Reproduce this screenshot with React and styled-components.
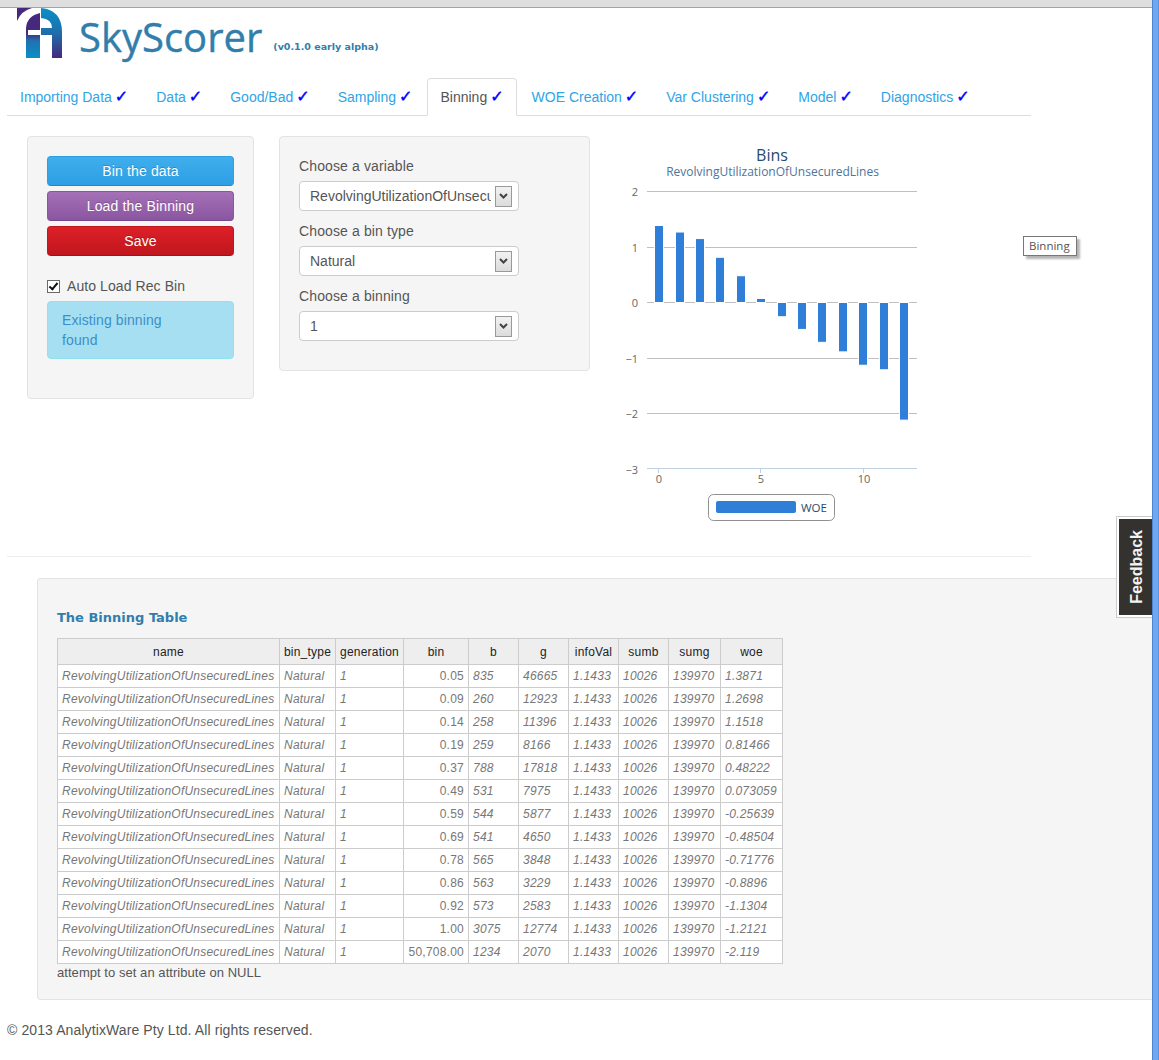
import React from 'react';
import styled, { createGlobalStyle } from 'styled-components';

const GlobalStyle = createGlobalStyle`
  html, body {
    margin: 0;
    padding: 0;
    background: #fff;
    font-family: "Liberation Sans", Arial, sans-serif;
    font-size: 14px;
    color: #555;
  }
`;

const BRAND_FONT = `"DejaVu Sans", Verdana, sans-serif`;
const CHART_FONT = `"Open Sans", "DejaVu Sans", sans-serif`;

const Page = styled.div`
  position: relative;
  display: flex;
  width: 1159px;
  height: 1060px;
  overflow: hidden;
`;

const Main = styled.div`
  width: 1152px;
  flex: none;
`;

const WindowEdge = styled.div`
  flex: 1;
  background: #6ea8f0;
  border-left: 1px solid #4f86cf;
  border-right: 1px solid #5f97de;
`;

const ChromeBar = styled.div`
  height: 7px;
  background: #dedede;
  border-bottom: 1px solid #a3a3a3;
`;

const Brand = styled.header`
  display: flex;
  align-items: flex-start;
  height: 50px;
  padding-left: 17px;
`;

const Title = styled.h1`
  margin: 4px 0 0 17px;
  font-family: "Open Sans", sans-serif;
  font-size: 40px;
  line-height: 50px;
  font-weight: 400;
  color: #317eac;
  -webkit-text-stroke: 0.4px #317eac;
`;

const Version = styled.small`
  margin: 31px 0 0 11px;
  font-family: ${BRAND_FONT};
  font-size: 9.5px;
  line-height: 16px;
  font-weight: 700;
  color: #317eac;
`;

const Tabs = styled.ul`
  display: flex;
  width: 1024px;
  height: 37px;
  margin: 20px 0 0 7px;
  padding: 0;
  list-style: none;
  border-bottom: 1px solid #ddd;
`;

const Tab = styled.li`
  box-sizing: border-box;
  height: 38px;
  margin-right: 2px;
  padding: 8px 12px;
  line-height: 20px;
  white-space: nowrap;
  color: ${p => (p.$active ? '#555' : '#2fa4e7')};
  background: ${p => (p.$active ? '#fff' : 'transparent')};
  border: 1px solid ${p => (p.$active ? '#ddd' : 'transparent')};
  border-bottom-color: ${p => (p.$active ? '#fff' : 'transparent')};
  border-radius: 4px 4px 0 0;
`;

const Tick = styled.span`
  margin-left: 3px;
  font-family: "DejaVu Sans", sans-serif;
  font-size: 16px;
  font-weight: 700;
  color: #0000ff;
  -webkit-text-stroke: 0.5px #0000ff;
`;

const Workspace = styled.section`
  display: flex;
  align-items: flex-start;
  height: 400px;
  margin: 20px 0 0 27px;
`;

const Well = styled.div`
  box-sizing: border-box;
  padding: 19px;
  background: #f5f5f5;
  border: 1px solid #e3e3e3;
  border-radius: 4px;
`;

const ActionsWell = styled(Well)`
  width: 227px;
  height: 263px;
  margin-right: 25px;
`;

const VariableWell = styled(Well)`
  width: 311px;
  height: 235px;
  margin-right: 20px;
`;

const ActionButton = styled.button`
  display: block;
  box-sizing: border-box;
  width: 187px;
  height: 30px;
  margin: 0 0 5px;
  padding: 0;
  font: 14px/20px "Liberation Sans", Arial, sans-serif;
  letter-spacing: 0.15px;
  color: #fff;
  text-shadow: 0 -1px 0 rgba(0, 0, 0, 0.2);
  background: linear-gradient(${p => p.$from}, ${p => p.$to});
  border: 1px solid ${p => p.$to};
  border-bottom-color: ${p => p.$edge};
  border-radius: 4px;
`;

const CheckRow = styled.label`
  display: flex;
  align-items: center;
  height: 20px;
  margin: 20px 0 5px;
  line-height: 20px;
  letter-spacing: 0.08px;
`;

const CheckInput = styled.input`
  appearance: none;
  position: relative;
  box-sizing: border-box;
  width: 13px;
  height: 13px;
  margin: 0 7px 0 0;
  background: #fff;
  border: 1px solid #6a6a6a;

  &:checked::after {
    content: '';
    position: absolute;
    left: 3px;
    top: 0;
    width: 3px;
    height: 7px;
    border: solid #111;
    border-width: 0 2px 2px 0;
    transform: rotate(40deg);
  }
`;

const Notice = styled.div`
  box-sizing: border-box;
  width: 187px;
  height: 58px;
  padding: 8px 35px 8px 14px;
  line-height: 20px;
  letter-spacing: 0.1px;
  color: #3a8fc9;
  background: #a6dff1;
  border: 1px solid #8fe3ee;
  border-radius: 4px;
`;

const FieldLabel = styled.div`
  height: 20px;
  margin-bottom: 5px;
  line-height: 20px;
  letter-spacing: 0.12px;
`;

const Dropdown = styled.div`
  display: flex;
  align-items: center;
  box-sizing: border-box;
  width: 220px;
  height: 30px;
  margin-bottom: 10px;
  padding: 0 6px 0 10px;
  background: #fff;
  border: 1px solid #ccc;
  border-radius: 4px;
`;

const DropdownValue = styled.span`
  flex: 1;
  overflow: hidden;
  white-space: nowrap;
  line-height: 20px;
  margin-right: 4px;
`;

const DropdownArrow = styled.span`
  display: flex;
  align-items: center;
  justify-content: center;
  box-sizing: border-box;
  width: 17px;
  height: 21px;
  background: linear-gradient(#f2f2f2, #dcdcdc);
  border: 1px solid #999;
`;

const ChartSvg = styled.svg`
  display: block;
  flex: none;
  width: 320px;
  height: 400px;
  font-family: ${CHART_FONT};
`;

const Tooltip = styled.div`
  position: absolute;
  left: 1023px;
  top: 236px;
  box-sizing: border-box;
  width: 54px;
  height: 20px;
  padding-left: 5px;
  font-family: ${CHART_FONT};
  font-size: 11.5px;
  line-height: 18px;
  color: #555;
  background: #fff;
  border: 1px solid #777;
  box-shadow: 3px 3px 2px #b5b5b5;
`;

const Divider = styled.hr`
  width: 1024px;
  height: 1px;
  margin: 20px 0 0 7px;
  background: #eee;
  border: 0;
`;

const TableWell = styled(Well)`
  width: 1125px;
  height: 422px;
  margin: 21px 0 0 37px;
  padding: 30px 19px 0;
  border-right: 0;
  border-radius: 4px 0 0 4px;
`;

const TableTitle = styled.h4`
  height: 17px;
  margin: 0 0 12px;
  font-family: ${BRAND_FONT};
  font-size: 13px;
  line-height: 17px;
  font-weight: 700;
  color: #317eac;
`;

const BinTable = styled.table`
  width: 725px;
  table-layout: fixed;
  border-collapse: collapse;
  background: #fff;
  font-size: 12px;
  letter-spacing: 0.23px;
`;

const HeadCell = styled.th`
  box-sizing: border-box;
  width: ${p => p.$w}px;
  height: 26px;
  padding: 0;
  font-weight: 400;
  text-align: center;
  white-space: nowrap;
  color: #222;
  background: #eee;
  border: 1px solid #ccc;
`;

const Cell = styled.td`
  height: 22px;
  padding: 0 4px;
  white-space: nowrap;
  overflow: hidden;
  font-style: ${p => (p.$num ? 'normal' : 'italic')};
  text-align: ${p => (p.$num ? 'right' : 'left')};
  color: #777;
  border: 1px solid #ccc;
`;

const TableNote = styled.div`
  margin-top: 1px;
  font-size: 13px;
  line-height: 16px;
  letter-spacing: 0.05px;
`;

const Footer = styled.footer`
  margin: 20px 0 0 7px;
  line-height: 20px;
  letter-spacing: 0.1px;
`;

const FeedbackTab = styled.div`
  position: absolute;
  left: 1116px;
  top: 516px;
  box-sizing: border-box;
  width: 36px;
  height: 102px;
  padding: 2px 0 2px 2px;
  background: #fff;
  border: 1px solid #ccc;
  border-right: 0;
`;

const FeedbackFace = styled.div`
  display: flex;
  align-items: center;
  justify-content: center;
  height: 100%;
  padding-left: 2px;
  background: #33322f;
`;

const FeedbackLabel = styled.span`
  writing-mode: vertical-rl;
  transform: rotate(180deg);
  font-size: 16px;
  font-weight: 700;
  color: #f2f2f2;
`;

const tabs = ['Importing Data', 'Data', 'Good/Bad', 'Sampling', 'Binning', 'WOE Creation', 'Var Clustering', 'Model', 'Diagnostics'];

const columns = [
  ['name', 222], ['bin_type', 56], ['generation', 68], ['bin', 65], ['b', 50],
  ['g', 50], ['infoVal', 50], ['sumb', 50], ['sumg', 52], ['woe', 62],
];

const rows = [
  ['0.05', 835, 46665, 1.3871],
  ['0.09', 260, 12923, 1.2698],
  ['0.14', 258, 11396, 1.1518],
  ['0.19', 259, 8166, 0.81466],
  ['0.37', 788, 17818, 0.48222],
  ['0.49', 531, 7975, 0.073059],
  ['0.59', 544, 5877, -0.25639],
  ['0.69', 541, 4650, -0.48504],
  ['0.78', 565, 3848, -0.71776],
  ['0.86', 563, 3229, -0.8896],
  ['0.92', 573, 2583, -1.1304],
  ['1.00', 3075, 12774, -1.2121],
  ['50,708.00', 1234, 2070, -2.119],
];

const ZERO_Y = 302.5;
const UNIT = 55.5;
const BAR_X = [659, 680, 700, 720, 741, 761, 782, 802, 822, 843, 863, 884, 904];
const gridY = v => Math.floor(ZERO_Y - v * UNIT) + 0.5;

const Logo = () => (
  <svg width="45" height="50" viewBox="0 0 45 50" style={{ flex: 'none' }}>
    <defs>
      <linearGradient id="logoLeft" x1="0" y1="0" x2="0" y2="1">
        <stop offset="0.45" stopColor="#46287c" />
        <stop offset="0.62" stopColor="#1f72b0" />
        <stop offset="1" stopColor="#0a8fc6" />
      </linearGradient>
      <linearGradient id="logoRight" x1="0" y1="0" x2="0" y2="1">
        <stop offset="0" stopColor="#0a8fc6" />
        <stop offset="0.5" stopColor="#1f6eaa" />
        <stop offset="1" stopColor="#46287c" />
      </linearGradient>
    </defs>
    <path d="M0 0H15Q4 3 0 13Z" fill="#46287c" />
    <path d="M9 50V20Q10 8 23 5V22H11V27H23V50Z" fill="url(#logoLeft)" />
    <path d="M24 0Q45 2 45 24V50H35V27H24V20H35Q35 11 24 10Z" fill="url(#logoRight)" />
  </svg>
);

const Chart = () => (
  <ChartSvg viewBox="610 136 320 400">
    <text x="772" y="161" textAnchor="middle" fontSize="16" fill="#274b6d">Bins</text>
    <text x="772.5" y="176" textAnchor="middle" fontSize="12" fill="#4d759e">RevolvingUtilizationOfUnsecuredLines</text>
    {[2, 1, 0, -1, -2].map(v => (
      <line key={v} x1="647" x2="917" y1={gridY(v)} y2={gridY(v)} stroke="#c0c0c0" />
    ))}
    <line x1="647" x2="917" y1="468.5" y2="468.5" stroke="#c0d0e0" />
    {[2, 1, 0, -1, -2, -3].map(v => (
      <text key={v} x="638" y={gridY(v) + 4} textAnchor="end" fontSize="11" fill="#666">
        {v < 0 ? `\u2212${-v}` : v}
      </text>
    ))}
    {[[0, 659], [5, 761], [10, 864]].map(([v, x]) => (
      <g key={v}>
        <line x1={x - 0.5} x2={x - 0.5} y1="469" y2="473" stroke="#c0d0e0" />
        <text x={x} y="483" textAnchor="middle" fontSize="11" fill="#666">{v}</text>
      </g>
    ))}
    {rows.map((r, i) => {
      const h = Math.abs(r[3]) * UNIT;
      return (
        <rect
          key={r[0]}
          x={BAR_X[i] - 4.5}
          y={r[3] > 0 ? ZERO_Y - h : ZERO_Y}
          width="9"
          height={h}
          fill="#2f7ed8"
          stroke="#fff"
        />
      );
    })}
    <rect x="708.5" y="494.5" width="126" height="26" rx="5" fill="#fff" stroke="#909090" />
    <rect x="716" y="501" width="80" height="12" rx="2" fill="#2f7ed8" />
    <text x="801" y="512" fontSize="11.5" fill="#274b6d">WOE</text>
  </ChartSvg>
);

const App = () => (
  <Page>
    <GlobalStyle />
    <Main>
      <ChromeBar />
      <Brand>
        <Logo />
        <Title>SkyScorer</Title>
        <Version>(v0.1.0 early alpha)</Version>
      </Brand>
      <Tabs>
        {tabs.map(t => (
          <Tab key={t} $active={t === 'Binning'}>
            {t}<Tick>✓</Tick>
          </Tab>
        ))}
      </Tabs>
      <Workspace>
        <ActionsWell>
          <ActionButton $from="#40aeed" $to="#2d9fe3" $edge="#2588c4">Bin the data</ActionButton>
          <ActionButton $from="#a570b6" $to="#8a56a0" $edge="#764789">Load the Binning</ActionButton>
          <ActionButton $from="#dd2028" $to="#c0161d" $edge="#a01218">Save</ActionButton>
          <CheckRow>
            <CheckInput type="checkbox" defaultChecked />
            Auto Load Rec Bin
          </CheckRow>
          <Notice>Existing binning found</Notice>
        </ActionsWell>
        <VariableWell>
          {[
            ['Choose a variable', 'RevolvingUtilizationOfUnsecuredLines'],
            ['Choose a bin type', 'Natural'],
            ['Choose a binning', '1'],
          ].map(([label, value]) => (
            <div key={label}>
              <FieldLabel>{label}</FieldLabel>
              <Dropdown>
                <DropdownValue>{value}</DropdownValue>
                <DropdownArrow>
                  <svg width="9" height="6" viewBox="0 0 9 6">
                    <path d="M1 1L4.5 4.5L8 1" fill="none" stroke="#444" strokeWidth="2" />
                  </svg>
                </DropdownArrow>
              </Dropdown>
            </div>
          ))}
        </VariableWell>
        <Chart />
      </Workspace>
      <Divider />
      <TableWell>
        <TableTitle>The Binning Table</TableTitle>
        <BinTable>
          <thead>
            <tr>
              {columns.map(([name, w]) => (
                <HeadCell key={name} $w={w}>{name}</HeadCell>
              ))}
            </tr>
          </thead>
          <tbody>
            {rows.map(r => (
              <tr key={r[0]}>
                <Cell>RevolvingUtilizationOfUnsecuredLines</Cell>
                <Cell>Natural</Cell>
                <Cell>1</Cell>
                <Cell $num>{r[0]}</Cell>
                <Cell>{r[1]}</Cell>
                <Cell>{r[2]}</Cell>
                <Cell>1.1433</Cell>
                <Cell>10026</Cell>
                <Cell>139970</Cell>
                <Cell>{r[3]}</Cell>
              </tr>
            ))}
          </tbody>
        </BinTable>
        <TableNote>attempt to set an attribute on NULL</TableNote>
      </TableWell>
      <Footer>© 2013 AnalytixWare Pty Ltd. All rights reserved.</Footer>
    </Main>
    <WindowEdge />
    <Tooltip>Binning</Tooltip>
    <FeedbackTab>
      <FeedbackFace>
        <FeedbackLabel>Feedback</FeedbackLabel>
      </FeedbackFace>
    </FeedbackTab>
  </Page>
);

export default App;
